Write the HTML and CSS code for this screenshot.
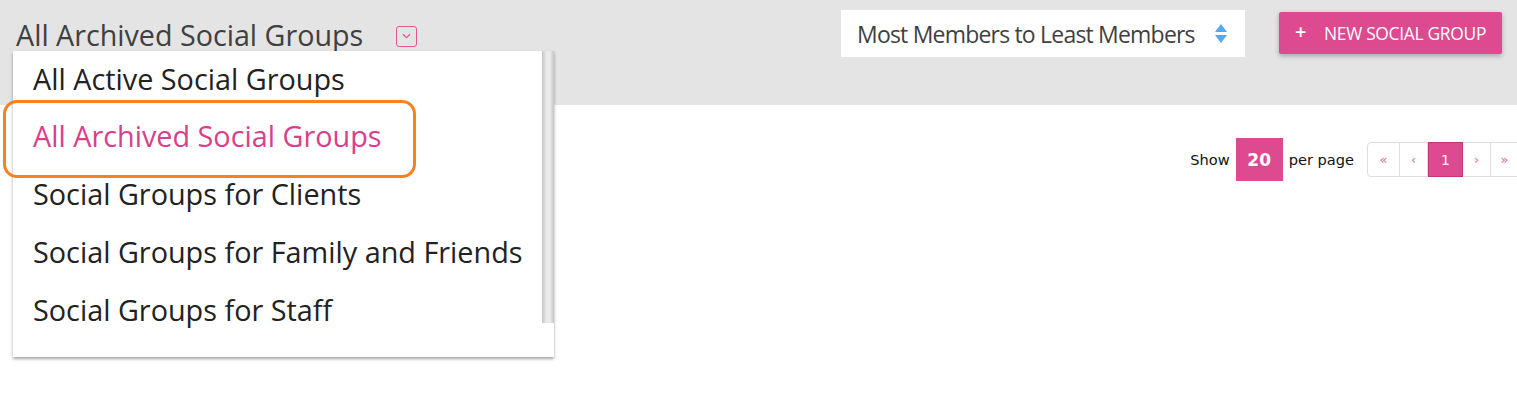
FILE: index.html
```html
<!DOCTYPE html>
<html lang="en">
<head>
<meta charset="utf-8">
<title>Social Groups</title>
<link rel="stylesheet" href="styles.css">
</head>
<body>
<div class="page">
  <header class="toolbar">
    <div class="view-picker">
      <h1 class="view-title">All Archived Social Groups</h1>
      <button class="view-toggle" type="button" aria-label="Choose view">
        <svg width="9" height="6" viewBox="0 0 9 6"><path d="M1 1.2 L4.5 4.6 L8 1.2" fill="none" stroke="#e0579a" stroke-width="1.2"/></svg>
      </button>
    </div>
    <div class="toolbar-actions">
      <div class="sort-select">
        <span class="sort-label">Most Members to Least Members</span>
        <svg class="sort-arrows" width="12" height="20" viewBox="0 0 12 20"><path d="M6 0 L12 8 L0 8 Z" fill="#55a6f4"/><path d="M0 11 L12 11 L6 19 Z" fill="#55a6f4"/></svg>
      </div>
      <button class="btn-primary" type="button"><span class="btn-plus">+</span><span class="btn-label">NEW SOCIAL GROUP</span></button>
    </div>
  </header>
  <main class="content">
    <div class="pager-row">
      <span class="pager-text">Show</span>
      <span class="per-page-box">20</span>
      <span class="pager-text">per page</span>
      <ul class="pagination">
        <li class="page-item first">«</li>
        <li class="page-item prev">‹</li>
        <li class="page-item active">1</li>
        <li class="page-item next">›</li>
        <li class="page-item last">»</li>
      </ul>
    </div>
  </main>
  <div class="view-menu">
    <ul class="menu-list">
      <li class="menu-item">All Active Social Groups</li>
      <li class="menu-item selected">All Archived Social Groups</li>
      <li class="menu-item">Social Groups for Clients</li>
      <li class="menu-item">Social Groups for Family and Friends</li>
      <li class="menu-item">Social Groups for Staff</li>
      <li class="menu-item">Social Groups for Seniors</li>
    </ul>
    <div class="scroll-rail"><div class="scroll-thumb"></div></div>
  </div>
  <div class="annotation"></div>
</div>
</body>
</html>
```
FILE: styles.css
```css
* { box-sizing: border-box; }
html, body { margin: 0; padding: 0; }
body {
  font-family: "Open Sans", "Liberation Sans", sans-serif;
  background: #fff;
  overflow: hidden;
  width: 1517px;
  height: 403px;
}
.page { position: relative; height: 403px; }

.toolbar {
  height: 105px;
  background: #e4e4e4;
  display: flex;
  justify-content: space-between;
  align-items: flex-start;
  padding: 10px 15px 0 16px;
}
.view-picker {
  display: flex;
  align-items: center;
  gap: 33px;
  padding-top: 5px;
}
.view-title {
  margin: 0;
  font-size: 28.7px;
  font-weight: 400;
  line-height: 40px;
  color: #404040;
}
.view-toggle {
  width: 21px;
  height: 21px;
  padding: 0;
  border: 1px solid #e0579a;
  border-radius: 3px;
  background: transparent;
  display: flex;
  align-items: center;
  justify-content: center;
  margin-top: 2px;
}
.toolbar-actions {
  display: flex;
  align-items: flex-start;
  gap: 34px;
}
.sort-select {
  width: 404px;
  height: 47px;
  background: #fff;
  display: flex;
  align-items: center;
  justify-content: space-between;
  padding: 0 18px 0 16px;
}
.sort-label {
  font-size: 23px;
  letter-spacing: -0.8px;
  color: #3f3f3f;
}
.btn-primary {
  margin-top: 2px;
  width: 223px;
  height: 42px;
  border: none;
  border-radius: 2px;
  background: #dd4a8f;
  color: #fff;
  font-family: "Open Sans", "Liberation Sans", sans-serif;
  display: flex;
  align-items: center;
  justify-content: flex-start;
  text-align: left;
  padding: 0 0 0 16px;
  box-shadow: 0 2px 5px rgba(0,0,0,0.28);
}
.btn-plus {
  font-size: 20px;
  font-weight: 600;
  width: 29px;
  line-height: 1;
  margin-top: -3px;
}
.btn-label {
  font-size: 17.4px;
  letter-spacing: -0.3px;
}

.content {
  padding: 33px 0 0 0;
}
.pager-row {
  display: flex;
  justify-content: flex-end;
  align-items: center;
  margin-right: -2px;
  font-family: "DejaVu Sans", sans-serif;
}
.pager-text {
  font-size: 14.6px;
  color: #111;
}
.per-page-box {
  width: 47px;
  height: 43px;
  margin: 0 6px;
  background: #dd4a8f;
  color: #fff;
  font-size: 17px;
  font-weight: 700;
  display: flex;
  align-items: center;
  justify-content: center;
}
.pagination {
  list-style: none;
  margin: 0 0 0 13px;
  padding: 0;
  display: flex;
  height: 35px;
}
.page-item {
  height: 35px;
  width: 28px;
  border: 1px solid #dedede;
  border-left: none;
  color: #e36ba3;
  font-size: 13px;
  display: flex;
  align-items: center;
  justify-content: center;
}
.page-item.first {
  width: 33px;
  border-left: 1px solid #dedede;
  border-radius: 4px 0 0 4px;
}
.page-item.active {
  width: 35px;
  background: #dd4a8f;
  border: 1px solid #c83279;
  color: #fff;
  font-size: 14px;
}

.view-menu {
  position: absolute;
  left: 13px;
  top: 51px;
  width: 541px;
  height: 306px;
  background: #fff;
  display: flex;
  box-shadow: 0 2px 3px rgba(0,0,0,0.35);
}
.menu-list {
  flex: 1;
  margin: 0;
  padding: 0;
  list-style: none;
  overflow: hidden;
}
.menu-item {
  height: 58px;
  line-height: 53px;
  padding-left: 20px;
  font-size: 28.8px;
  color: #222;
  white-space: nowrap;
}
.menu-item:first-child { line-height: 56px; }
.menu-item.selected { color: #da3f89; }
.scroll-rail {
  width: 12px;
  background: #fff;
}
.scroll-thumb {
  height: 272px;
  background: linear-gradient(to right, #c4c4c4, #e9e9e9 35%, #ececec 65%, #c4c4c4);
}

.annotation {
  position: absolute;
  left: 3px;
  top: 100px;
  width: 413px;
  height: 78px;
  border: 3px solid #f7821f;
  border-radius: 14px;
}
```
